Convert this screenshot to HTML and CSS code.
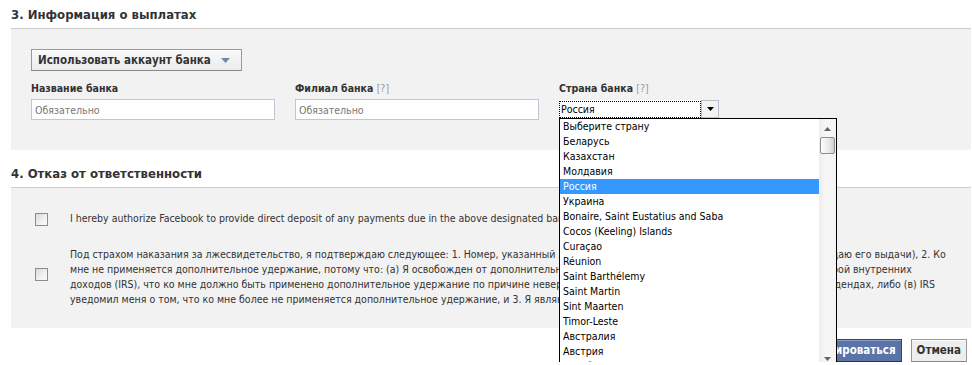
FILE: index.html
```html
<!DOCTYPE html>
<html lang="ru">
<head>
<meta charset="utf-8">
<title>Информация о выплатах</title>
<link rel="stylesheet" href="styles.css">
</head>
<body>
<div class="page">
  <h2 class="section-title">3. Информация о выплатах</h2>
  <div class="panel panel-payout">
    <button class="menu-btn" type="button">Использовать аккаунт банка<svg class="menu-caret" width="9" height="5" viewBox="0 0 9 5"><path d="M0 0H9L4.5 5Z"/></svg></button>
    <div class="fields">
      <div class="field">
        <label class="field-label">Название банка</label>
        <input class="text-input" type="text" placeholder="Обязательно">
      </div>
      <div class="field">
        <label class="field-label">Филиал банка <span class="help">[?]</span></label>
        <input class="text-input" type="text" placeholder="Обязательно">
      </div>
      <div class="field field-country">
        <label class="field-label">Страна банка <span class="help">[?]</span></label>
        <div class="select">
          <div class="select-value">Россия</div>
          <div class="select-arrow"><svg width="7" height="4" viewBox="0 0 7 4"><path d="M0 0H7L3.5 4Z"/></svg></div>
          <div class="dropdown">
            <ul class="options">
              <li>Выберите страну</li>
              <li>Беларусь</li>
              <li>Казахстан</li>
              <li>Молдавия</li>
              <li class="selected">Россия</li>
              <li>Украина</li>
              <li>Bonaire, Saint Eustatius and Saba</li>
              <li>Cocos (Keeling) Islands</li>
              <li>Curaçao</li>
              <li>Réunion</li>
              <li>Saint Barthélemy</li>
              <li>Saint Martin</li>
              <li>Sint Maarten</li>
              <li>Timor-Leste</li>
              <li>Австралия</li>
              <li>Австрия</li>
              <li>Азербайджан</li>
            </ul>
            <div class="scrollbar">
              <svg class="sb-up" width="7" height="4" viewBox="0 0 7 4"><path d="M3.5 0L7 4H0Z"/></svg>
              <div class="sb-thumb"></div>
              <svg class="sb-down" width="7" height="4" viewBox="0 0 7 4"><path d="M0 0H7L3.5 4Z"/></svg>
            </div>
          </div>
        </div>
      </div>
    </div>
  </div>

  <h2 class="section-title section-title-2">4. Отказ от ответственности</h2>
  <div class="panel panel-terms">
    <div class="term">
      <span class="checkbox"></span>
      <p class="term-text">I hereby authorize Facebook to provide direct deposit of any payments due in the above designated bank account.</p>
    </div>
    <div class="term term-long">
      <span class="checkbox"></span>
      <p class="term-text">Под страхом наказания за лжесвидетельство, я подтверждаю следующее: 1. Номер, указанный в этом бланке, является моим верным ИНН (или я ожидаю его выдачи), 2. Ко<br>мне не применяется дополнительное удержание, потому что: (а) Я освобожден от дополнительного налога, или (б) я не уведомлялся Налоговой службой внутренних<br>доходов (IRS), что ко мне должно быть применено дополнительное удержание по причине неверного указания сведений обо всех процентах или дивидендах, либо (в) IRS<br>уведомил меня о том, что ко мне более не применяется дополнительное удержание, и 3. Я являюсь гражданином США или иным лицом США.</p>
    </div>
  </div>

  <div class="actions">
    <button class="btn btn-primary" type="button">Зарегистрироваться</button>
    <button class="btn btn-cancel" type="button">Отмена</button>
  </div>
</div>
</body>
</html>
```
FILE: styles.css
```css
html, body {
  overflow: hidden;
}

body {
  margin: 0;
  background: #fff;
  color: #333;
  font-family: "DejaVu Sans Condensed", "DejaVu Sans", sans-serif;
  font-size: 10.5px;
}

.page {
  width: 960px;
  padding-left: 11px;
}

.section-title {
  margin: 0;
  padding: 7px 0 5px;
  font-size: 13px;
  line-height: 16px;
  font-weight: bold;
  color: #333;
}

.section-title-2 {
  margin-top: 9px;
}

.panel {
  background: #f2f2f2;
  border-top: 1px solid #ccc;
}

.panel-payout {
  padding: 20px 20px 30px;
}

.menu-btn {
  display: flex;
  align-items: center;
  box-sizing: border-box;
  width: 211px;
  height: 22px;
  margin: 0;
  padding: 0 6px;
  border: 1px solid #999;
  border-bottom-color: #888;
  background: linear-gradient(#f9f9f9, #ececec);
  box-shadow: inset 0 1px 0 #fff;
  font: bold 11.5px "DejaVu Sans Condensed", "DejaVu Sans", sans-serif;
  color: #333;
  text-align: left;
}

.menu-caret {
  margin-left: auto;
  margin-right: 5px;
  fill: #7486b0;
}

.fields {
  display: flex;
  gap: 20px;
  margin-top: 10px;
}

.field {
  display: flex;
  flex-direction: column;
  width: 244px;
}

.field-label {
  display: block;
  height: 14px;
  line-height: 14px;
  font-weight: bold;
  color: #333;
}

.help {
  font-weight: normal;
  color: #999;
}

.text-input {
  box-sizing: border-box;
  width: 244px;
  height: 21px;
  margin: 4px 0 0;
  padding: 0 3px;
  border: 1px solid #bdc7d8;
  background: #fff;
  font: 10.5px "DejaVu Sans Condensed", "DejaVu Sans", sans-serif;
  color: #333;
}

.text-input::placeholder {
  color: #777;
}

.select {
  position: relative;
  display: flex;
  width: 160px;
  height: 18px;
  margin-top: 5px;
  background: #fff;
}

.select-value {
  flex: 1;
  box-sizing: border-box;
  height: 17px;
  margin-top: 1px;
  padding-left: 1px;
  border: 1px dotted #000;
  line-height: 15px;
  color: #000;
}

.select-arrow {
  display: flex;
  align-items: center;
  justify-content: center;
  box-sizing: border-box;
  width: 18px;
  height: 18px;
  border: 1px solid #b7c0d3;
  background: #f3f3f3;
  fill: #000;
}

.dropdown {
  position: absolute;
  z-index: 10;
  top: 18px;
  left: 0;
  display: flex;
  box-sizing: border-box;
  width: 278px;
  height: 262px;
  border: 1px solid #000;
  background: #fff;
}

.options {
  flex: 1;
  margin: 0;
  padding: 0;
  list-style: none;
  overflow: hidden;
  color: #000;
}

.options li {
  height: 15px;
  padding-left: 3px;
  line-height: 15px;
  white-space: nowrap;
}

.options li.selected {
  background: #3399ff;
  color: #fff;
}

.scrollbar {
  position: relative;
  width: 17px;
  background: linear-gradient(to right, #ececec, #f7f7f7 40%, #f4f4f4);
  fill: #666;
}

.sb-up {
  position: absolute;
  top: 8px;
  left: 5px;
}

.sb-down {
  position: absolute;
  top: 238px;
  left: 5px;
}

.sb-thumb {
  position: absolute;
  top: 18px;
  left: 1px;
  box-sizing: border-box;
  width: 15px;
  height: 17px;
  border: 1px solid #8e8e8e;
  border-radius: 2px;
  background: linear-gradient(to right, #fdfdfd, #e9e9e9 60%, #cfcfcf);
}

.panel-terms {
  padding: 23px 16px 21px 24px;
}

.term {
  display: flex;
  gap: 22px;
}

.term-long {
  margin-top: 21px;
}

.checkbox {
  flex: none;
  box-sizing: border-box;
  width: 13px;
  height: 13px;
  margin-top: 2px;
  border: 1px solid #8c8c8c;
  background: linear-gradient(135deg, #d9d9d9, #f2f2f2 60%, #fafafa);
}

.term-long .checkbox {
  margin-top: 21px;
}

.term-text {
  margin: 0;
  line-height: 15px;
  color: #333;
  white-space: nowrap;
}

.actions {
  display: flex;
  justify-content: flex-end;
  gap: 9px;
  margin-top: 11px;
  padding-right: 4px;
}

.btn {
  box-sizing: border-box;
  height: 23px;
  margin: 0;
  padding: 0 5px;
  border: 1px solid;
  font: bold 11.5px "DejaVu Sans Condensed", "DejaVu Sans", sans-serif;
  line-height: 21px;
}

.btn-primary {
  border-color: #29447e #29447e #1a356e;
  background: #5b74a8;
  box-shadow: inset 0 1px 0 #8a9cc2;
  color: #fff;
}

.btn-cancel {
  border-color: #999 #999 #888;
  background: #eee;
  box-shadow: inset 0 1px 0 #fff;
  color: #333;
}
```
